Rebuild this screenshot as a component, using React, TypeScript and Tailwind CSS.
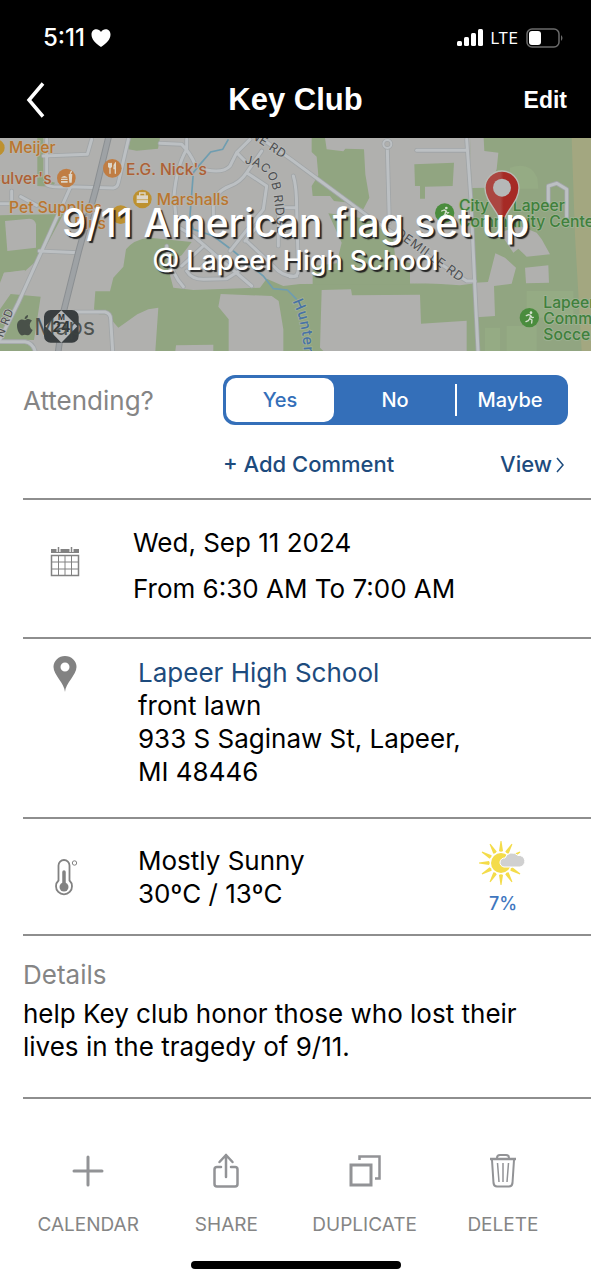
import { useState } from "react";

const ROADS = [
  "M140 10 V145 Q145 155 200 152 L340 156 Q352 154 355 140 L385 10",
  "M130 60 L262 55 L275 10",
  "M35 165 V205 M62 182 L110 208 M0 203 H30",
  "M212 152 L150 290 L55 500 L0 610",
  "M118 345 L235 350",
  "M225 528 H315 Q332 532 332 550 L338 645",
  "M0 617 H75 Q98 620 105 645",
  "M480 22 L545 25 Q570 50 585 85 M560 10 V40 Q530 90 522 180 L530 270 L580 300 L755 450",
  "M620 102 Q670 112 690 90 L710 50 L750 10 M710 50 L735 75",
  "M785 45 L740 110 Q720 140 690 150 Q640 170 640 210 V260 M740 110 L800 150 L790 220 L690 345",
  "M500 330 Q510 410 550 452 M560 405 Q575 430 610 430 L680 428 L740 390",
  "M610 330 L545 390 M640 355 L600 400 M740 315 L820 390 Q850 425 890 420",
  "M735 315 L790 250",
  "M880 120 Q890 150 890 220 L895 400 Q895 425 870 422 M835 215 H890 M835 215 V330",
  "M795 15 L873 70 L1110 245 L1400 435 H1425",
  "M1162 40 L1168 260",
  "M1250 43 H1400",
  "M1400 10 L1412 180 L1424 440 L1434 645",
  "M1645 200 V150 L1670 142 L1700 160 V245",
];

const OPTIONS = ["Yes", "No", "Maybe"];

function MapBackdrop() {
  return (
    <svg
      className="absolute inset-0 h-full w-full"
      viewBox="0 6 1773 639"
      preserveAspectRatio="xMidYMid slice"
      fontFamily="Inter, sans-serif"
      aria-hidden="true"
    >
      <rect y="6" width="1773" height="639" fill="#b0b0ae" />

      {/* Parks and fields */}
      <g fill="#91a581">
        <path d="M385 40 L392 6 H480 L474 38 L410 44Z" />
        <path d="M112 6 H130 V130 L165 140 L158 152 L112 150Z" />
        <path d="M0 238 L190 234 L120 365 L75 405 L12 410 L0 440Z" />
        <path d="M32 474 L122 482 L102 612 L0 610 V520Z M0 622 H85 L100 645 H0Z" />
        <path d="M378 340 Q400 310 450 305 L575 318 L545 358 L500 380 L520 455 L580 462 L780 455 L800 428 L850 450 L900 444 L1430 442 V645 H180 L200 560 H320 L282 520 L286 466 H330 L340 425 L370 392Z" />
        <path d="M935 6 H975 L980 40 L1030 46 L1036 38 L1092 40 L1096 115 L1108 185 L1090 220 L1050 200 L1002 195 L990 180 L938 180 L935 150 L955 118 L950 62 L935 48Z" />
        <path d="M1243 85 L1362 80 L1358 150 L1275 152 V188 H1260 V150 H1245Z" />
        <path d="M985 232 L1110 250 L1180 310 L1186 370 L1230 382 V445 H938 V390 L1010 382 L1025 320Z" />
        <path d="M1410 6 H1773 V645 H1436Z" />
      </g>
      <g fill="#b0b0ae">
        <path d="M15 255 L88 248 Q106 250 108 265 V335 L22 345Z" />
        <path d="M0 450 L12 410 L75 402 L55 470 L0 476Z" />
        <path d="M190 535 H320 L355 575 L412 535 L445 520 L475 515 L466 645 H180Z" />
        <path d="M528 628 L640 626 V645 H526Z" />
        <path d="M662 474 L815 480 L836 495 L850 580 V645 H686 V550 L655 512Z" />
        <path d="M965 462 L1053 460 L1056 478 L1260 476 L1263 563 L1400 554 V645 H970 L960 635Z" />
        <path d="M1230 385 L1425 442 L1380 448 L1230 438Z" />
        <path d="M1410 6 H1451 L1453 45 L1495 50 L1490 100 L1465 155 L1415 156Z" />
        <path d="M1425 440 L1464 438 L1486 352 L1515 365 L1548 395 L1535 443 L1482 450 L1485 540 L1430 544Z" />
        <path d="M1500 290 L1560 270 L1610 290 L1625 310 L1650 355 L1580 362 L1555 338 L1540 350Z M1575 395 L1645 388 L1647 440 L1578 442Z" />
      </g>
      <path d="M1715 6 H1773 V645 H1745 L1725 300Z" fill="#a3a780" />
      <path d="M1530 95 Q1590 75 1612 125 L1615 158 H1530Z M1455 575 H1500 V645 H1455Z M1520 570 H1610 V645 H1520Z M1580 465 H1720 V545 H1580Z" fill="#95ab84" />

      {/* Creek */}
      <path d="M685 10 L668 40 L632 48 L600 85 L580 110 L570 240 L580 280 L640 300 L700 345 L790 420 L820 458 L862 462 L890 490" fill="none" stroke="#6f9db0" strokeWidth="5" />

      {/* Streets, drawn twice for the casing */}
      <g fill="none" strokeLinecap="round" strokeLinejoin="round">
        {ROADS.map((d) => (
          <path key={d} d={d} stroke="#a1a5a7" strokeWidth="14" />
        ))}
        {ROADS.map((d) => (
          <path key={d} d={d} stroke="#bcc0c3" strokeWidth="9" />
        ))}
        <path d="M325 6 L290 150 L235 350 L190 530 L175 645" stroke="#8b8f92" strokeWidth="20" />
        <path d="M325 6 L290 150 L235 350 L190 530 L175 645" stroke="#9ea2a5" strokeWidth="14" />
        <circle cx="1162" cy="24" r="12" stroke="#a1a5a7" strokeWidth="10" />
        <circle cx="1162" cy="24" r="12" stroke="#bcc0c3" strokeWidth="6" />
      </g>

      {/* Street names */}
      <g fill="#4c4e50" stroke="#b8b9b8" strokeWidth="5" paintOrder="stroke" fontSize="36" letterSpacing="2">
        <path id="jacob" d="M733 82 Q810 92 820 170 Q830 240 834 340" fill="none" stroke="none" />
        <text>
          <textPath href="#jacob">JACOB RIDGE</textPath>
        </text>
        <text transform="translate(750 4) rotate(33)">NE RD</text>
        <text transform="translate(1184 296) rotate(36)" fontSize="38">DEMILLE RD</text>
        <text transform="translate(8 606) rotate(-68)" fontSize="34">N RD</text>
      </g>
      <path id="creek" d="M877 496 Q912 560 914 700" fill="none" />
      <text fill="#4773a6" stroke="#a2b095" strokeWidth="5" paintOrder="stroke" fontSize="44" fontWeight="500" letterSpacing="3">
        <textPath href="#creek">Hunters</textPath>
      </text>

      {/* Places */}
      <g fontSize="47" fontWeight="500" stroke="#b9b5ab" strokeWidth="5" paintOrder="stroke">
        <g fill="#b9762f">
          <text x="27" y="52">Meijer</text>
          <text x="470" y="207">Marshalls</text>
          <text x="27" y="231">Pet Supplies</text>
          <text x="318" y="280" textAnchor="end">Plus</text>
        </g>
        <g fill="#ad6036">
          <text x="378" y="116">E.G. Nick's</text>
          <text x="155" y="145" textAnchor="end">Culver's</text>
        </g>
        <g fill="#40803c" stroke="#9fb394">
          <text x="1377" y="225">City of Lapeer</text>
          <text x="1377" y="273">Community Center</text>
          <text x="1630" y="515">Lapeer</text>
          <text x="1630" y="564">Community</text>
          <text x="1630" y="612">Soccer</text>
        </g>
      </g>
      <circle cx="-10" cy="35" r="24" fill="#bd9130" />
      <circle cx="337" cy="97" r="28" fill="#c07d43" />
      <circle cx="199" cy="126" r="28" fill="#c07d43" />
      <circle cx="427" cy="189" r="28" fill="#bd9130" />
      <circle cx="362" cy="236" r="28" fill="#bd9130" />
      <g stroke="#ddd6c8" strokeWidth="4" fill="none" strokeLinecap="round">
        <path d="M326 82 V92 Q330 98 334 92 V82 M330 82 V112 M346 112 V82 Q340 88 342 98 H346" />
        <path d="M419 178 V171 H435 V178" />
        <path d="M211 112 L214 106" />
      </g>
      <path d="M410 178 H444 V201 H410Z" fill="#ddd6c8" />
      <path d="M410 191 H444" stroke="#bd9130" strokeWidth="2" />
      <path d="M183 125 Q193 115 203 125Z M183 128 H203 V132 H183Z M183 135 H203 V140 H183Z M206 114 H217 L215 140 H208Z" fill="#ddd6c8" />
      {[[1334, 231], [1588, 545]].map(([x, y]) => (
        <g key={x} transform={`translate(${x} ${y})`}>
          <circle r="29" fill="#4a8c3d" />
          <circle cx="5" cy="-15" r="4" fill="#d5dfcf" />
          <path d="M-9 -6 L-2 -9 L4 -7 L1 3 L8 7 L7 16 M1 3 L-3 9 L-10 12 M4 -6 L8 0 L12 -1" fill="none" stroke="#d5dfcf" strokeWidth="4" strokeLinecap="round" strokeLinejoin="round" />
        </g>
      ))}

      {/* Highway shield */}
      <rect x="132" y="522" width="104" height="98" rx="20" fill="#393e40" />
      <path d="M184 523 L232 571 L184 620 L136 571Z" fill="#b4b6b6" />
      <g fill="#333839" fontWeight="700" textAnchor="middle">
        <text x="184" y="552" fontSize="22">M</text>
        <text x="184" y="588" fontSize="42">24</text>
      </g>

      {/* Maps watermark */}
      <g fill="#3c423f" fillOpacity="0.85">
        <path d="M75 553 C83 546 90 549 96 554 C86 561 88 577 98 582 C94 591 88 599 82 598 C77 596 73 595 68 598 C60 600 51 582 51 569 C51 554 63 546 75 553Z M74 550 C73 543 78 538 84 537 C85 544 80 549 74 550Z" />
        <text x="103" y="597" fontSize="70">Maps</text>
      </g>

      {/* Event pin */}
      <defs>
        <linearGradient id="pin">
          <stop offset="0.45" stopColor="#ab4641" />
          <stop offset="0.55" stopColor="#a62a25" />
        </linearGradient>
      </defs>
      <path d="M1506 272 C1500 225 1455 200 1455 156 A51 51 0 0 1 1557 156 C1557 200 1512 225 1506 272Z" fill="url(#pin)" stroke="#b9bcb5" strokeWidth="4" />
      <circle cx="1506" cy="155" r="27" fill="#b5b8b8" />
    </svg>
  );
}

function StatusBar() {
  return (
    <div className="flex h-[62px] items-center justify-between pt-3.5 pr-[27px] pl-[43px]">
      <div className="flex items-center gap-1.5">
        <span className="text-2xl font-medium">5:11</span>
        <svg className="h-[18px] w-5" viewBox="0 0 20 18" fill="currentColor">
          <path d="M10 18 C4 14 .5 10 .5 5.500 C.5 -.5 7.500 -1.500 10 3 C12.500 -1.500 19.500 -.5 19.500 5.500 C19.500 10 16 14 10 18Z" />
        </svg>
      </div>
      <div className="flex items-center gap-2">
        <svg className="h-[18px] w-[26px]" viewBox="0 0 26 18" fill="currentColor">
          <rect y="12" width="5" height="5" rx="1.500" />
          <rect x="7" y="8" width="5" height="9" rx="1.500" />
          <rect x="14" y="4" width="5" height="13" rx="1.500" />
          <rect x="21" y="0" width="5" height="17" rx="1.500" />
        </svg>
        <span className="text-base">LTE</span>
        <svg className="h-5 w-[38px]" viewBox="0 0 38 20" fill="none">
          <rect x="1" y="1" width="32" height="18" rx="5" stroke="#6b6b6b" strokeWidth="1.500" />
          <rect x="3" y="3" width="12" height="14" rx="3" fill="#fff" />
          <path d="M35 7 Q38 10 35 13Z" fill="#6b6b6b" />
        </svg>
      </div>
    </div>
  );
}

function CalendarIcon() {
  return (
    <svg className="h-[30px] w-[30px]" viewBox="0 0 30 30" fill="none" stroke="#828282">
      <path d="M1 4 H29" strokeWidth="4" />
      <path d="M1.500 8.500 H28.500 V28.500 H1.500Z" strokeWidth="1.500" />
      <path d="M8.500 8 V28 M15 8 V28 M21.500 8 V28 M1 15 H29 M1 22 H29" />
      <path d="M8.500 0 V5 M21.500 0 V5" stroke="#fff" strokeWidth="4" />
      <path d="M8.500 0 V5 M21.500 0 V5" strokeWidth="1.500" />
    </svg>
  );
}

function PinIcon() {
  return (
    <svg className="h-9 w-6" viewBox="0 0 24 36" fill="#828282">
      <path fillRule="evenodd" d="M12 36 C11.500 27 .5 19 .5 11 A11.500 11 0 0 1 23.500 11 C23.500 19 12.500 27 12 36Z M12 6.500 A4.500 4.500 0 1 0 12 15.500 A4.500 4.500 0 1 0 12 6.500Z" />
    </svg>
  );
}

function ThermometerIcon() {
  return (
    <svg className="h-[38px] w-7" viewBox="0 0 28 38" fill="none" stroke="#828282">
      <path d="M4.500 21.500 V6.500 A5.500 5.500 0 0 1 15.500 6.500 V21.500 A8 8 0 1 1 4.500 21.500Z" strokeWidth="1.800" />
      <path d="M10 13 V27" strokeWidth="3.500" strokeLinecap="round" />
      <circle cx="10" cy="28" r="4.500" fill="#828282" stroke="none" />
      <circle cx="20.500" cy="4" r="2.200" strokeWidth="1" />
    </svg>
  );
}

function SunIcon() {
  return (
    <svg className="h-[46px] w-12" viewBox="0 0 48 46">
      <g fill="#f4dc4a">
        {Array.from({ length: 12 }).map((_, i) => (
          <path key={i} d="M21.500 1 H22.500 L24 11 Q22 12.500 20 11Z" transform={`rotate(${i * 30} 22 23)`} />
        ))}
        <circle cx="22" cy="23" r="10" />
      </g>
      <path d="M25 27 A4.500 4.500 0 0 1 26 18 A7.500 7 0 0 1 39 15.500 A5.800 5.800 0 1 1 41 27Z" fill="#d0d0d0" stroke="#fff" strokeWidth="1" />
    </svg>
  );
}

const actions = [
  {
    label: "CALENDAR",
    icon: <path d="M18 4 V32 M4 18 H32" strokeWidth="3" strokeLinecap="round" />,
  },
  {
    label: "SHARE",
    icon: <path d="M13 14 H9 Q6.500 14 6.500 16.500 V31 Q6.500 33.500 9 33.500 H27 Q29.500 33.500 29.500 31 V16.500 Q29.500 14 27 14 H23 M18 24 V2 M11.500 9 L18 2 L24.500 9" strokeWidth="2.500" strokeLinecap="round" strokeLinejoin="round" />,
  },
  {
    label: "DUPLICATE",
    icon: (
      <>
        <path d="M4 12 H24 V32 H4Z" strokeWidth="3" />
        <path d="M12.500 7 V3.500 H32.500 V25.500 H28" strokeWidth="2.500" />
      </>
    ),
  },
  {
    label: "DELETE",
    icon: (
      <>
        <path d="M5 6 H31" strokeWidth="2.500" />
        <path d="M12 5 Q12 2 15 2 H21 Q24 2 24 5 M7 7 L8.500 30 Q9 33.500 12 33.500 H24 Q27 33.500 27.500 30 L29 7" strokeWidth="2" />
        <path d="M12.500 10 L14 29 M18 10 V29 M23.500 10 L22 29" strokeWidth="1.500" />
      </>
    ),
  },
];

export default function App() {
  const [attending, setAttending] = useState("Yes");

  return (
    <div className="min-h-screen bg-white font-['Inter',sans-serif] text-black">
      <header className="bg-black text-white">
        <StatusBar />
        <nav className="grid h-[76px] grid-cols-3 items-center px-6 font-['Liberation_Sans',sans-serif] font-bold">
          <button aria-label="Back" className="justify-self-start">
            <svg className="h-9 w-6" viewBox="0 0 24 36" fill="none" stroke="currentColor" strokeWidth="3.500">
              <path d="M19 1.500 L5 18 L19 34.500" />
            </svg>
          </button>
          <h1 className="text-center text-[31px] whitespace-nowrap">Key Club</h1>
          <button className="justify-self-end text-[23px]">Edit</button>
        </nav>
      </header>

      <section className="relative h-[213px] overflow-hidden">
        <MapBackdrop />
        <div className="relative pt-[62px] text-center font-medium text-white [text-shadow:2px_2px_1px_#222]">
          <h2 className="text-[39px] leading-[46px]">9/11 American flag set up</h2>
          <p className="text-[27px] leading-[30px]">@ Lapeer High School</p>
        </div>
      </section>

      <main className="pl-[23px]">
        <section className="border-b-2 border-[#8e8e8e] pt-6 pr-[23px] pb-4">
          <fieldset className="flex items-center justify-between">
            <legend className="sr-only">Attending</legend>
            <span className="text-[26px] text-[#858585]">Attending?</span>
            <div className="grid h-[50px] w-[345px] grid-cols-3 rounded-xl bg-[#346fb9] text-xl font-medium">
              {OPTIONS.map((option) => (
                <label
                  key={option}
                  className="flex items-center border-l-2 border-transparent py-[3px] pr-1 pl-px text-white last:bg-[linear-gradient(#fff,#fff)] last:bg-[length:2px_32px] last:bg-left last:bg-no-repeat has-checked:text-[#346fb9]"
                >
                  <input
                    type="radio"
                    name="attending"
                    className="peer sr-only"
                    checked={attending === option}
                    onChange={() => setAttending(option)}
                  />
                  <span className="flex h-full w-full items-center justify-center rounded-[10px] peer-checked:bg-white">{option}</span>
                </label>
              ))}
            </div>
          </fieldset>
          <div className="ml-auto flex h-[57px] w-[345px] items-center justify-between pt-[22px] pr-1 text-[22px] font-medium text-[#1d4b7d]">
            <button>+ Add Comment</button>
            <button className="flex items-center gap-1">
              View
              <svg className="h-4 w-2" viewBox="0 0 8 16" fill="none" stroke="currentColor" strokeWidth="1.500">
                <path d="M1 1 L7 8 L1 15" />
              </svg>
            </button>
          </div>
        </section>

        <section className="flex items-start border-b-2 border-[#8e8e8e] pt-5 pb-[25px]">
          <div className="flex w-[110px] pt-[27px] pl-[27px]">
            <CalendarIcon />
          </div>
          <div className="text-[26px] leading-[46px]">
            <p>Wed, Sep 11 2024</p>
            <p>From 6:30 AM To 7:00 AM</p>
          </div>
        </section>

        <section className="flex items-start border-b-2 border-[#8e8e8e] pt-[17px] pb-[29px]">
          <div className="flex w-[115px] pl-[30px]">
            <PinIcon />
          </div>
          <address className="text-[26px] leading-[33px] not-italic">
            <a href="#map" className="text-[#1d4b7d]">Lapeer High School</a>
            <br />
            front lawn
            <br />
            933 S Saginaw St, Lapeer,
            <br />
            MI 48446
          </address>
        </section>

        <section className="flex items-start border-b-2 border-[#8e8e8e] pt-[25px] pb-6">
          <div className="flex w-[115px] pt-[15px] pl-[31px]">
            <ThermometerIcon />
          </div>
          <div className="text-[26px] leading-[33px]">
            <p>Mostly Sunny</p>
            <p>30ºC / 13ºC</p>
          </div>
          <div className="-mt-1 -mb-4 mr-16 ml-auto flex flex-col items-center gap-1.5">
            <SunIcon />
            <span className="text-lg leading-6 font-medium text-[#3f77bf]">7%</span>
          </div>
        </section>

        <section className="border-b-2 border-[#8e8e8e] pt-[22px] pr-6 pb-[34px] text-[26px] leading-[33px]">
          <h3 className="pb-1.5 text-[#858585]">Details</h3>
          <p className="max-w-[520px]">help Key club honor those who lost their lives in the tragedy of 9/11.</p>
        </section>
      </main>

      <footer className="px-[19px] pt-[54px]">
        <div className="grid grid-cols-4">
          {actions.map((action) => (
            <button key={action.label} className="flex flex-col items-center gap-[22px] text-[#858585]">
              <svg className="h-9 w-9" viewBox="0 0 36 36" fill="none" stroke="#929396">
                {action.icon}
              </svg>
              <span className="text-[19px] leading-7">{action.label}</span>
            </button>
          ))}
        </div>
        <div className="mx-auto mt-[22px] h-2 w-[210px] rounded-full bg-black" />
      </footer>
    </div>
  );
}
